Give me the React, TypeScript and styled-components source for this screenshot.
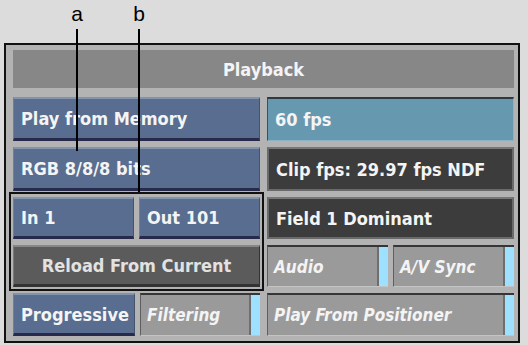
import React from 'react'
import styled, { createGlobalStyle, css } from 'styled-components'

const GlobalStyle = createGlobalStyle`
  html, body {
    margin: 0;
    padding: 0;
    background: #dcdcdc;
  }
  body {
    width: 528px;
    height: 345px;
    overflow: hidden;
    font-family: 'DejaVu Sans Condensed', 'DejaVu Sans', sans-serif;
  }
`

const Page = styled.div`
  position: relative;
  width: 528px;
  height: 345px;
  padding: 43px 8px 0 4px;
  box-sizing: border-box;
`

const Callout = styled.div<{ x: number; bottom: number }>`
  position: absolute;
  left: ${(p) => p.x - 7}px;
  top: 3px;
  width: 16px;
  height: ${(p) => p.bottom - 3}px;
  display: flex;
  flex-direction: column;
  align-items: center;
  z-index: 2;
  pointer-events: none;
`

const CalloutLetter = styled.span`
  font-family: 'Liberation Sans', Arial, sans-serif;
  font-size: 21px;
  line-height: 22px;
  color: #000;
`

const CalloutLine = styled.div`
  flex: 1;
  width: 2px;
  margin-top: 4px;
  background: #000;
`

const Panel = styled.div`
  height: 300px;
  box-sizing: border-box;
  border: 2px solid #111;
  background: #b3b3b3;
  padding: 5px 5px 0 7px;
  display: grid;
  grid-template-columns: 247px 247px;
  grid-template-rows: 41px 44px 44px 42px 42px 43px;
  column-gap: 7px;
  row-gap: 6px;
`

const Title = styled.div`
  grid-column: 1 / span 2;
  margin-bottom: 3px;
  background: #878787;
  display: flex;
  align-items: center;
  justify-content: center;
  color: #f4f4f4;
  font-weight: bold;
  font-size: 18px;
`

type Tone = 'blue' | 'teal' | 'dark' | 'gray'

const tones = {
  blue: css`
    background: #586d8f;
    border-top: 2px solid #8193ad;
    border-left: 1px solid #6c7f9c;
    border-right: 1px solid #44546f;
    border-bottom: 3px solid #272a4a;
  `,
  teal: css`
    background: #6698b0;
    border-top: 2px solid #2f3a40;
    border-left: 1px solid #3d4f58;
    border-right: 1px solid #89b4c6;
    border-bottom: 1px solid #89b4c6;
  `,
  dark: css`
    background: #3c3c3c;
    border: 2px solid #6a6a6a;
    border-top-color: #777;
  `,
  gray: css`
    background: #9a9a9a;
    border-top: 2px solid #3a3a3a;
    border-left: 1px solid #5f5f5f;
    border-right: 1px solid #c2c2c2;
    border-bottom: 1px solid #c2c2c2;
  `
}

const Button = styled.div<{ tone: Tone; center?: boolean }>`
  box-sizing: border-box;
  min-width: 0;
  display: flex;
  align-items: center;
  justify-content: ${(p) => (p.center ? 'center' : 'flex-start')};
  padding: 0 7px;
  color: #f4f4f4;
  font-weight: bold;
  font-size: 18px;
  white-space: nowrap;
  overflow: hidden;
  ${(p) => tones[p.tone]}
`

const Reload = styled.div`
  box-sizing: border-box;
  display: flex;
  align-items: center;
  justify-content: center;
  background: #5b5b5b;
  border-top: 2px solid #878787;
  border-left: 1px solid #7a7a7a;
  border-right: 1px solid #333;
  border-bottom: 3px solid #333;
  color: #e2e2e2;
  font-weight: bold;
  font-size: 18px;
`

const Toggle = styled.div`
  box-sizing: border-box;
  min-width: 0;
  display: flex;
  background: #9a9a9a;
  border-top: 2px solid #363636;
  border-left: 1px solid #5f5f5f;
  border-bottom: 1px solid #c4c4c4;
`

const ToggleLabel = styled.span`
  flex: 1;
  display: flex;
  align-items: center;
  padding: 0 6px;
  color: #f4f4f4;
  font-weight: bold;
  font-style: italic;
  font-size: 17px;
  white-space: nowrap;
  overflow: hidden;
`

const Indicator = styled.span`
  width: 9px;
  background: #9de0ff;
  border-left: 2px solid #6e6e6e;
`

const Pair = styled.div<{ split?: string }>`
  display: grid;
  grid-template-columns: ${(p) => p.split || '1fr 1fr'};
  gap: 5px;
  min-width: 0;
`

const Group = styled.div`
  grid-column: 1;
  grid-row: 4 / span 2;
  margin: -5px -4px -4px -4px;
  padding: 3px 2px 2px 2px;
  border: 2px solid #111;
  display: grid;
  grid-template-rows: 42px 42px;
  row-gap: 6px;
`

const Cell = styled.div<{ col: number; row: number }>`
  grid-column: ${(p) => p.col};
  grid-row: ${(p) => p.row};
  display: grid;
  min-width: 0;
`

function ToggleButton({ label }: { label: string }) {
  return (
    <Toggle>
      <ToggleLabel>{label}</ToggleLabel>
      <Indicator />
    </Toggle>
  )
}

export default function App() {
  return (
    <>
      <GlobalStyle />
      <Page>
        <Callout x={76} bottom={151}>
          <CalloutLetter>a</CalloutLetter>
          <CalloutLine />
        </Callout>
        <Callout x={138} bottom={192}>
          <CalloutLetter>b</CalloutLetter>
          <CalloutLine />
        </Callout>
        <Panel>
          <Title>Playback</Title>
          <Cell col={1} row={2}>
            <Button tone="blue">Play from Memory</Button>
          </Cell>
          <Cell col={2} row={2}>
            <Button tone="teal">60 fps</Button>
          </Cell>
          <Cell col={1} row={3}>
            <Button tone="blue">RGB 8/8/8 bits</Button>
          </Cell>
          <Cell col={2} row={3}>
            <Button tone="dark">Clip fps: 29.97 fps NDF</Button>
          </Cell>
          <Group>
            <Pair>
              <Button tone="blue">In 1</Button>
              <Button tone="blue">Out 101</Button>
            </Pair>
            <Reload>Reload From Current</Reload>
          </Group>
          <Cell col={2} row={4}>
            <Button tone="dark">Field 1 Dominant</Button>
          </Cell>
          <Cell col={2} row={5}>
            <Pair>
              <ToggleButton label="Audio" />
              <ToggleButton label="A/V Sync" />
            </Pair>
          </Cell>
          <Cell col={1} row={6}>
            <Pair split="122px 1fr">
              <Button tone="blue">Progressive</Button>
              <ToggleButton label="Filtering" />
            </Pair>
          </Cell>
          <Cell col={2} row={6}>
            <ToggleButton label="Play From Positioner" />
          </Cell>
        </Panel>
      </Page>
    </>
  )
}
